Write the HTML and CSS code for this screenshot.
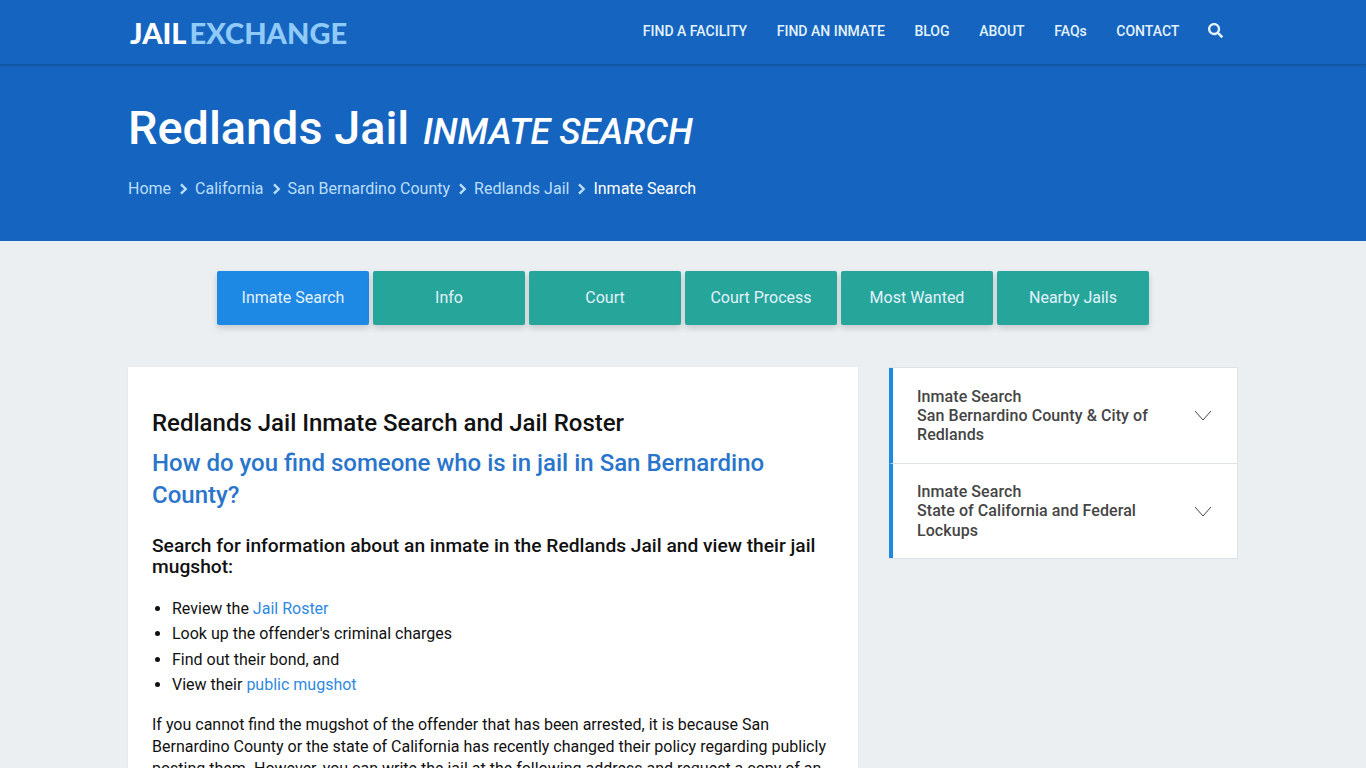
FILE: index.html
```html
<!DOCTYPE html>
<html lang="en">
<head>
    <meta charset="UTF-8">
    <meta name="viewport" content="width=device-width, initial-scale=1.0">
    <title>Redlands Jail Inmate Search</title>
    <link rel="stylesheet" href="styles.css">
</head>
<body>
    <header class="topbar">
        <div class="wrap topbar-row">
            <a class="logo" href="#"><span class="logo-a">JAIL</span><span class="logo-b">EXCHANGE</span></a>
            <nav class="nav">
                <a href="#">FIND A FACILITY</a>
                <a href="#">FIND AN INMATE</a>
                <a href="#">BLOG</a>
                <a href="#">ABOUT</a>
                <a href="#">FAQs</a>
                <a href="#">CONTACT</a>
                <a href="#" class="nav-search" aria-label="Search">
                    <svg width="15" height="15" viewBox="0 0 512 512"><path fill="currentColor" d="M505 442.700L405.300 343c-4.500-4.500-10.600-7-17-7H372c27.600-35.300 44-79.700 44-128C416 93.100 322.900 0 208 0S0 93.100 0 208s93.100 208 208 208c48.300 0 92.700-16.400 128-44v16.300c0 6.400 2.500 12.500 7 17l99.700 99.700c9.400 9.400 24.600 9.400 33.900 0l28.300-28.300c9.400-9.400 9.400-24.600.1-34zM208 336c-70.700 0-128-57.200-128-128 0-70.700 57.200-128 128-128 70.700 0 128 57.200 128 128 0 70.700-57.200 128-128 128z"/></svg>
                </a>
            </nav>
        </div>
    </header>

    <section class="hero">
        <div class="wrap">
            <h1 class="hero-title">Redlands Jail <em>INMATE SEARCH</em></h1>
            <div class="crumbs">
                <a href="#">Home</a>
                <svg class="crumb-sep" width="9" height="12" viewBox="0 0 9 12"><path d="M2 1.300 6.700 6 2 10.700" fill="none" stroke="currentColor" stroke-width="2.400"/></svg>
                <a href="#">California</a>
                <svg class="crumb-sep" width="9" height="12" viewBox="0 0 9 12"><path d="M2 1.300 6.700 6 2 10.700" fill="none" stroke="currentColor" stroke-width="2.400"/></svg>
                <a href="#">San Bernardino County</a>
                <svg class="crumb-sep" width="9" height="12" viewBox="0 0 9 12"><path d="M2 1.300 6.700 6 2 10.700" fill="none" stroke="currentColor" stroke-width="2.400"/></svg>
                <a href="#">Redlands Jail</a>
                <svg class="crumb-sep" width="9" height="12" viewBox="0 0 9 12"><path d="M2 1.300 6.700 6 2 10.700" fill="none" stroke="currentColor" stroke-width="2.400"/></svg>
                <span class="crumb-current">Inmate Search</span>
            </div>
        </div>
    </section>

    <div class="tabs">
        <a href="#" class="tab tab-active">Inmate Search</a>
        <a href="#" class="tab">Info</a>
        <a href="#" class="tab">Court</a>
        <a href="#" class="tab">Court Process</a>
        <a href="#" class="tab">Most Wanted</a>
        <a href="#" class="tab">Nearby Jails</a>
    </div>

    <div class="wrap columns">
        <main class="card">
            <h2 class="card-title">Redlands Jail Inmate Search and Jail Roster</h2>
            <h3 class="card-sub">How do you find someone who is in jail in San Bernardino County?</h3>
            <h4 class="card-lead">Search for information about an inmate in the Redlands Jail and view their jail mugshot:</h4>
            <ul class="card-list">
                <li>Review the <a href="#">Jail Roster</a></li>
                <li>Look up the offender's criminal charges</li>
                <li>Find out their bond, and</li>
                <li>View their <a href="#">public mugshot</a></li>
            </ul>
            <p class="card-text">If you cannot find the mugshot of the offender that has been arrested, it is because San Bernardino County or the state of California has recently changed their policy regarding publicly posting them. However, you can write the jail at the following address and request a copy of an</p>
        </main>

        <aside class="side">
            <div class="side-item">
                <div class="side-label">Inmate Search<br>San Bernardino County &amp; City of Redlands</div>
                <svg class="side-chev" width="18" height="11" viewBox="0 0 18 11"><path d="M1 1l8 9 8-9" fill="none" stroke="currentColor" stroke-width="1"/></svg>
            </div>
            <div class="side-item">
                <div class="side-label">Inmate Search<br>State of California and Federal Lockups</div>
                <svg class="side-chev" width="18" height="11" viewBox="0 0 18 11"><path d="M1 1l8 9 8-9" fill="none" stroke="currentColor" stroke-width="1"/></svg>
            </div>
        </aside>
    </div>
</body>
</html>
```

FILE: styles.css
```css
* {
    box-sizing: border-box;
}
html, body {
    height: 768px;
    overflow: hidden;
}
body {
    margin: 0;
    font-family: Roboto, "Liberation Sans", sans-serif;
    font-size: 16px;
    background: #ebeff2;
    color: #111;
}
a {
    text-decoration: none;
}
.wrap {
    width: 1110px;
    margin: 0 auto;
}

.topbar {
    height: 65px;
    background: #1565c0;
    border-bottom: 1px solid #0f559f;
    box-shadow: 0 1px 2px rgba(0, 0, 0, 0.15);
    position: relative;
}
.topbar-row {
    height: 64px;
    display: flex;
    align-items: center;
    justify-content: space-between;
}
.logo {
    font-family: Lato, "Open Sans", sans-serif;
    font-weight: 900;
    font-size: 29px;
    padding-left: 2px;
}
.logo-a { color: #fff; }
.logo-b { color: #90caf9; margin-left: 3px; }
.nav {
    display: flex;
    align-items: center;
    gap: 29.6px;
    padding-right: 15px;
    margin-top: -3px;
}
.nav a {
    color: #e3f2fd;
    font-size: 14px;
    font-weight: 500;
}
.nav-search {
    display: flex;
    margin-left: -1px;
}

.hero {
    height: 176px;
    background: #1565c0;
    color: #fff;
    padding-top: 35px;
}
.hero-title {
    margin: 0;
    font-size: 46.800px;
    font-weight: 500;
    line-height: 56px;
}
.hero-title em {
    font-size: 36px;
    margin-left: 2px;
    font-weight: 500;
}
.crumbs {
    display: flex;
    align-items: center;
    margin-top: 17px;
    color: #bbdefb;
    line-height: 24px;
}
.crumbs a {
    color: #bbdefb;
}
.crumb-sep {
    margin: 0 7px 0 8px;
}
.crumb-current {
    color: #fff;
}

.tabs {
    display: flex;
    justify-content: center;
    gap: 4px;
    margin-top: 30px;
}
.tab {
    width: 152px;
    height: 54px;
    display: flex;
    align-items: center;
    justify-content: center;
    padding-bottom: 2px;
    background: #26a69a;
    color: #e3f2fd;
    border-radius: 2px;
    box-shadow: 0 3px 6px rgba(0, 0, 0, 0.16);
}
.tab-active {
    background: #1e88e5;
}

.columns {
    display: grid;
    grid-template-columns: 730px 349px;
    justify-content: space-between;
    align-items: start;
    margin-top: 42px;
}
.card {
    background: #fff;
    padding: 40px 24px 24px;
    box-shadow: 0 1px 3px rgba(0, 0, 0, 0.05);
}
.card-title {
    margin: 0;
    font-size: 24px;
    font-weight: 500;
    line-height: 32px;
}
.card-sub {
    margin: 8px 0 0;
    font-size: 24px;
    font-weight: 500;
    line-height: 32px;
    color: #2a75cc;
}
.card-lead {
    margin: 24px 0 0;
    font-size: 19.200px;
    font-weight: 500;
    line-height: 21px;
}
.card-list {
    margin: 19px 0 0;
    padding-left: 20px;
    line-height: 25.400px;
}
.card-list a {
    color: #2e8ae0;
}
.card-text {
    margin: 16px 0 0;
    line-height: 22px;
}

.side {
    background: #fff;
    border: 1px solid #dde2e6;
}
.side-item {
    height: 95px;
    display: flex;
    align-items: center;
    justify-content: space-between;
    border-left: 4px solid #1e88e5;
    padding: 0 25px 0 24px;
    margin-left: -1px;
}
.side-item + .side-item {
    border-top: 1px solid #dde2e6;
}
.side-label {
    width: 250px;
    font-weight: 500;
    line-height: 19.200px;
    letter-spacing: 0.07px;
    color: #454545;
}
.side-chev {
    color: #454545;
}
```
